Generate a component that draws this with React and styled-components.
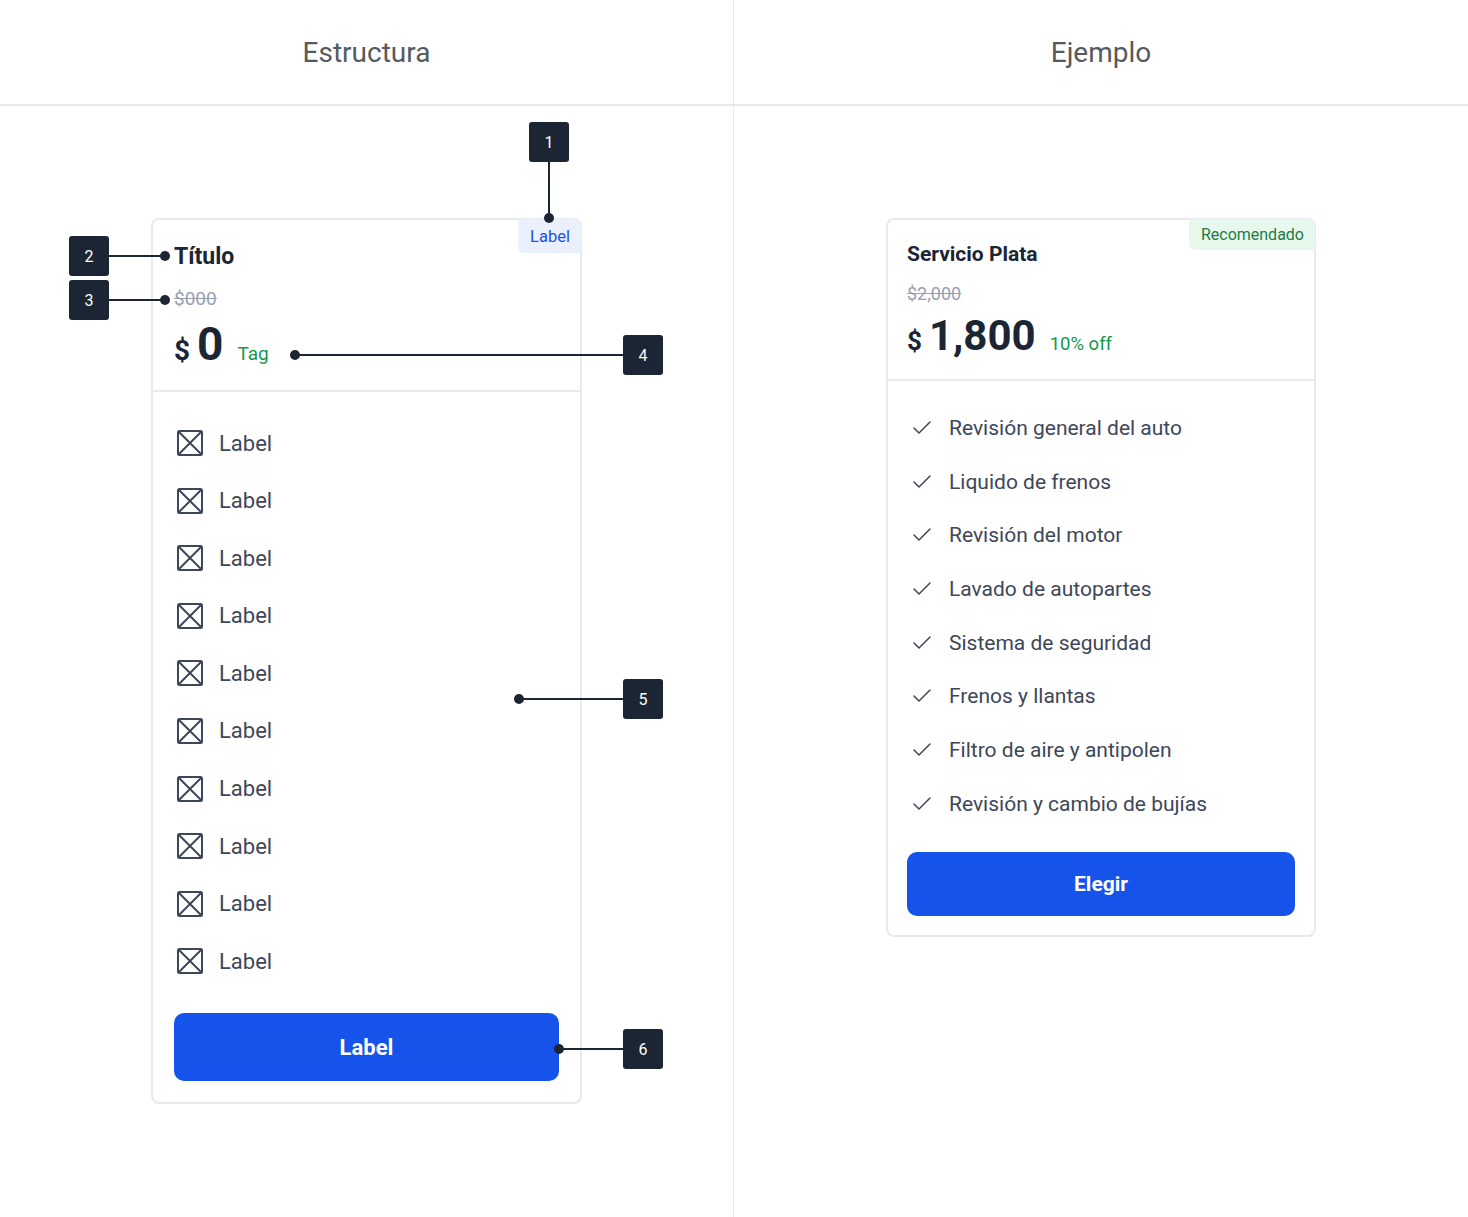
import React from "react";
import styled, { createGlobalStyle } from "styled-components";
import { Check } from "lucide-react";

const COLORS = {
  ink: "#1c2533",
  text: "#3d4759",
  muted: "#98a1b3",
  line: "#e8e9ef",
  blue: "#1553ea",
  green: "#16984a",
};

const GlobalStyle = createGlobalStyle`
  * { box-sizing: border-box; }
  html, body { margin: 0; padding: 0; background: #fff; }
  body {
    font-family: Roboto, "Noto Sans", sans-serif;
    color: ${COLORS.ink};
  }
`;

// Two card sizes: the annotated skeleton is a bit roomier than the example
const SIZES = {
  structure: {
    width: 431,
    padX: 21,
    headTop: 23,
    headBottom: 19,
    title: 23,
    titleLine: 28,
    titleGap: 17,
    old: 19,
    oldLine: 22,
    priceGap: 7,
    amount: 46,
    amountLine: 54,
    dollar: 28,
    tag: 19,
    listTop: 34,
    rowHeight: 34,
    rowGap: 23.6,
    itemSize: 22,
    buttonGap: 35,
    buttonHeight: 68,
    buttonFont: 22,
    bottom: 21,
  },
  example: {
    width: 430,
    padX: 19,
    headTop: 22,
    headBottom: 18,
    title: 21,
    titleLine: 25,
    titleGap: 16,
    old: 18,
    oldLine: 21,
    priceGap: 7,
    amount: 42,
    amountLine: 50,
    dollar: 26,
    tag: 18.5,
    listTop: 33,
    rowHeight: 28,
    rowGap: 25.7,
    itemSize: 21,
    buttonGap: 34,
    buttonHeight: 64,
    buttonFont: 21,
    bottom: 19,
  },
};

const PlaceholderIcon = () => (
  <svg width="32" height="32" viewBox="0 0 32 32" fill="none">
    <rect x="4" y="4" width="24" height="24" rx="1.5" stroke={COLORS.text} strokeWidth="2" />
    <path d="M4.5 4.5 27.5 27.5M27.5 4.5 4.5 27.5" stroke={COLORS.text} strokeWidth="2" />
  </svg>
);

const PriceCard = ({ size, badge, title, oldPrice, amount, tag, items, icon, action }) => {
  const s = SIZES[size];
  return (
    <Card $s={s}>
      {badge && <Badge $tone={badge.tone}>{badge.text}</Badge>}
      <CardHead $s={s}>
        <Title $s={s}>{title}</Title>
        <OldPrice $s={s}>{oldPrice}</OldPrice>
        <PriceRow $s={s}>
          <Dollar $size={s.dollar}>$</Dollar>
          <Amount $size={s.amount}>{amount}</Amount>
          <Discount $size={s.tag}>{tag}</Discount>
        </PriceRow>
      </CardHead>
      <CardBody $s={s}>
        <List $s={s}>
          {items.map((item, i) => (
            <Item key={i} $s={s} $icon={icon}>
              {icon === "check" ? (
                <Check size={24} strokeWidth={1.5} color={COLORS.text} />
              ) : (
                <PlaceholderIcon />
              )}
              <span>{item}</span>
            </Item>
          ))}
        </List>
        <Button $s={s}>{action}</Button>
      </CardBody>
    </Card>
  );
};

// Annotation marker: a numbered box tied to a dot by a line
const Callout = ({ num, box, dot }) => {
  const B = 40;
  let line;
  if (dot.x > box.x && dot.x < box.x + B) {
    line = { left: dot.x - 1, top: box.y + B, width: 2, height: dot.y - box.y - B };
  } else if (dot.x < box.x) {
    line = { left: dot.x, top: dot.y - 1, width: box.x - dot.x, height: 2 };
  } else {
    line = { left: box.x + B, top: dot.y - 1, width: dot.x - box.x - B, height: 2 };
  }
  return (
    <>
      <Leader style={line} />
      <Dot style={{ left: dot.x - 5, top: dot.y - 5 }} />
      <NumberBox style={{ left: box.x, top: box.y }}>{num}</NumberBox>
    </>
  );
};

const App = () => {
  const labels = Array.from({ length: 10 }, () => "Label");
  const features = [
    "Revisión general del auto",
    "Liquido de frenos",
    "Revisión del motor",
    "Lavado de autopartes",
    "Sistema de seguridad",
    "Frenos y llantas",
    "Filtro de aire y antipolen",
    "Revisión y cambio de bujías",
  ];

  return (
    <>
      <GlobalStyle />
      <Page>
        <Column $divider>
          <ColumnHeader>Estructura</ColumnHeader>
          <ColumnBody>
            <Frame>
              <PriceCard
                size="structure"
                badge={{ text: "Label", tone: "blue" }}
                title="Título"
                oldPrice="$000"
                amount="0"
                tag="Tag"
                items={labels}
                icon="placeholder"
                action="Label"
              />
              <Callout num={1} box={{ x: 378, y: -96 }} dot={{ x: 398, y: 0 }} />
              <Callout num={2} box={{ x: -82, y: 18 }} dot={{ x: 14, y: 38 }} />
              <Callout num={3} box={{ x: -82, y: 62 }} dot={{ x: 14, y: 82 }} />
              <Callout num={4} box={{ x: 472, y: 117 }} dot={{ x: 144, y: 137 }} />
              <Callout num={5} box={{ x: 472, y: 461 }} dot={{ x: 368, y: 481 }} />
              <Callout num={6} box={{ x: 472, y: 811 }} dot={{ x: 408, y: 831 }} />
            </Frame>
          </ColumnBody>
        </Column>
        <Column>
          <ColumnHeader>Ejemplo</ColumnHeader>
          <ColumnBody>
            <PriceCard
              size="example"
              badge={{ text: "Recomendado", tone: "green" }}
              title="Servicio Plata"
              oldPrice="$2,000"
              amount="1,800"
              tag="10% off"
              items={features}
              icon="check"
              action="Elegir"
            />
          </ColumnBody>
        </Column>
      </Page>
    </>
  );
};

const Page = styled.main`
  display: grid;
  grid-template-columns: 734px 1fr;
  min-height: 100vh;
`;

const Column = styled.section`
  display: flex;
  flex-direction: column;
  border-right: ${(p) => (p.$divider ? `1px solid ${COLORS.line}` : "none")};
`;

const ColumnHeader = styled.h2`
  margin: 0;
  height: 106px;
  display: flex;
  align-items: center;
  justify-content: center;
  border-bottom: 2px solid ${COLORS.line};
  font-size: 28px;
  font-weight: 400;
  color: #555a60;
`;

const ColumnBody = styled.div`
  flex: 1;
  display: flex;
  justify-content: center;
  align-items: flex-start;
  padding-top: 112px;
`;

const Frame = styled.div`
  position: relative;
`;

const Card = styled.article`
  position: relative;
  width: ${(p) => p.$s.width}px;
  border: 2px solid ${COLORS.line};
  border-radius: 8px;
  background: #fff;
`;

const Badge = styled.span`
  position: absolute;
  top: -1px;
  right: -1px;
  padding: 0 11px 0 12px;
  height: ${(p) => (p.$tone === "blue" ? 34 : 31)}px;
  display: flex;
  align-items: center;
  font-size: ${(p) => (p.$tone === "blue" ? 16.5 : 16)}px;
  border-radius: 0 7px 0 6px;
  color: ${(p) => (p.$tone === "blue" ? "#2152e3" : "#1f7a46")};
  background: ${(p) => (p.$tone === "blue" ? "#eaf0fd" : "#e7f9ec")};
`;

const CardHead = styled.header`
  padding: ${(p) => `${p.$s.headTop}px ${p.$s.padX}px ${p.$s.headBottom}px`};
  border-bottom: 2px solid ${COLORS.line};
`;

const Title = styled.h3`
  margin: 0;
  font-size: ${(p) => p.$s.title}px;
  line-height: ${(p) => p.$s.titleLine}px;
  font-weight: 700;
  color: ${COLORS.ink};
`;

const OldPrice = styled.div`
  margin-top: ${(p) => p.$s.titleGap}px;
  font-size: ${(p) => p.$s.old}px;
  line-height: ${(p) => p.$s.oldLine}px;
  color: ${COLORS.muted};
  text-decoration: line-through;
`;

const PriceRow = styled.div`
  margin-top: ${(p) => p.$s.priceGap}px;
  display: flex;
  align-items: baseline;
  line-height: ${(p) => p.$s.amountLine}px;
  height: ${(p) => p.$s.amountLine}px;
`;

const Dollar = styled.span`
  font-size: ${(p) => p.$size}px;
  font-weight: 700;
  margin-right: 7px;
`;

const Amount = styled.span`
  font-size: ${(p) => p.$size}px;
  font-weight: 700;
  color: ${COLORS.ink};
  margin-right: 14px;
`;

const Discount = styled.span`
  font-size: ${(p) => p.$size}px;
  color: ${COLORS.green};
`;

const CardBody = styled.div`
  padding: ${(p) => `${p.$s.listTop}px ${p.$s.padX}px ${p.$s.bottom}px`};
`;

const List = styled.ul`
  list-style: none;
  margin: 0;
  padding: 0;
  display: flex;
  flex-direction: column;
  gap: ${(p) => p.$s.rowGap}px;
`;

const Item = styled.li`
  display: flex;
  align-items: center;
  height: ${(p) => p.$s.rowHeight}px;
  gap: ${(p) => (p.$icon === "check" ? 15 : 13)}px;
  font-size: ${(p) => p.$s.itemSize}px;
  color: ${COLORS.text};

  svg {
    flex-shrink: 0;
    margin-left: ${(p) => (p.$icon === "check" ? 3 : 0)}px;
  }
`;

const Button = styled.button`
  display: block;
  width: 100%;
  margin-top: ${(p) => p.$s.buttonGap}px;
  height: ${(p) => p.$s.buttonHeight}px;
  border: none;
  border-radius: 10px;
  background: ${COLORS.blue};
  color: #fff;
  font-family: inherit;
  font-size: ${(p) => p.$s.buttonFont}px;
  font-weight: 700;
  cursor: pointer;
`;

const Leader = styled.span`
  position: absolute;
  background: ${COLORS.ink};
`;

const Dot = styled.span`
  position: absolute;
  width: 10px;
  height: 10px;
  border-radius: 50%;
  background: ${COLORS.ink};
`;

const NumberBox = styled.span`
  position: absolute;
  width: 40px;
  height: 40px;
  border-radius: 3px;
  background: ${COLORS.ink};
  color: #fff;
  font-size: 16px;
  display: flex;
  align-items: center;
  justify-content: center;
`;

export default App;
